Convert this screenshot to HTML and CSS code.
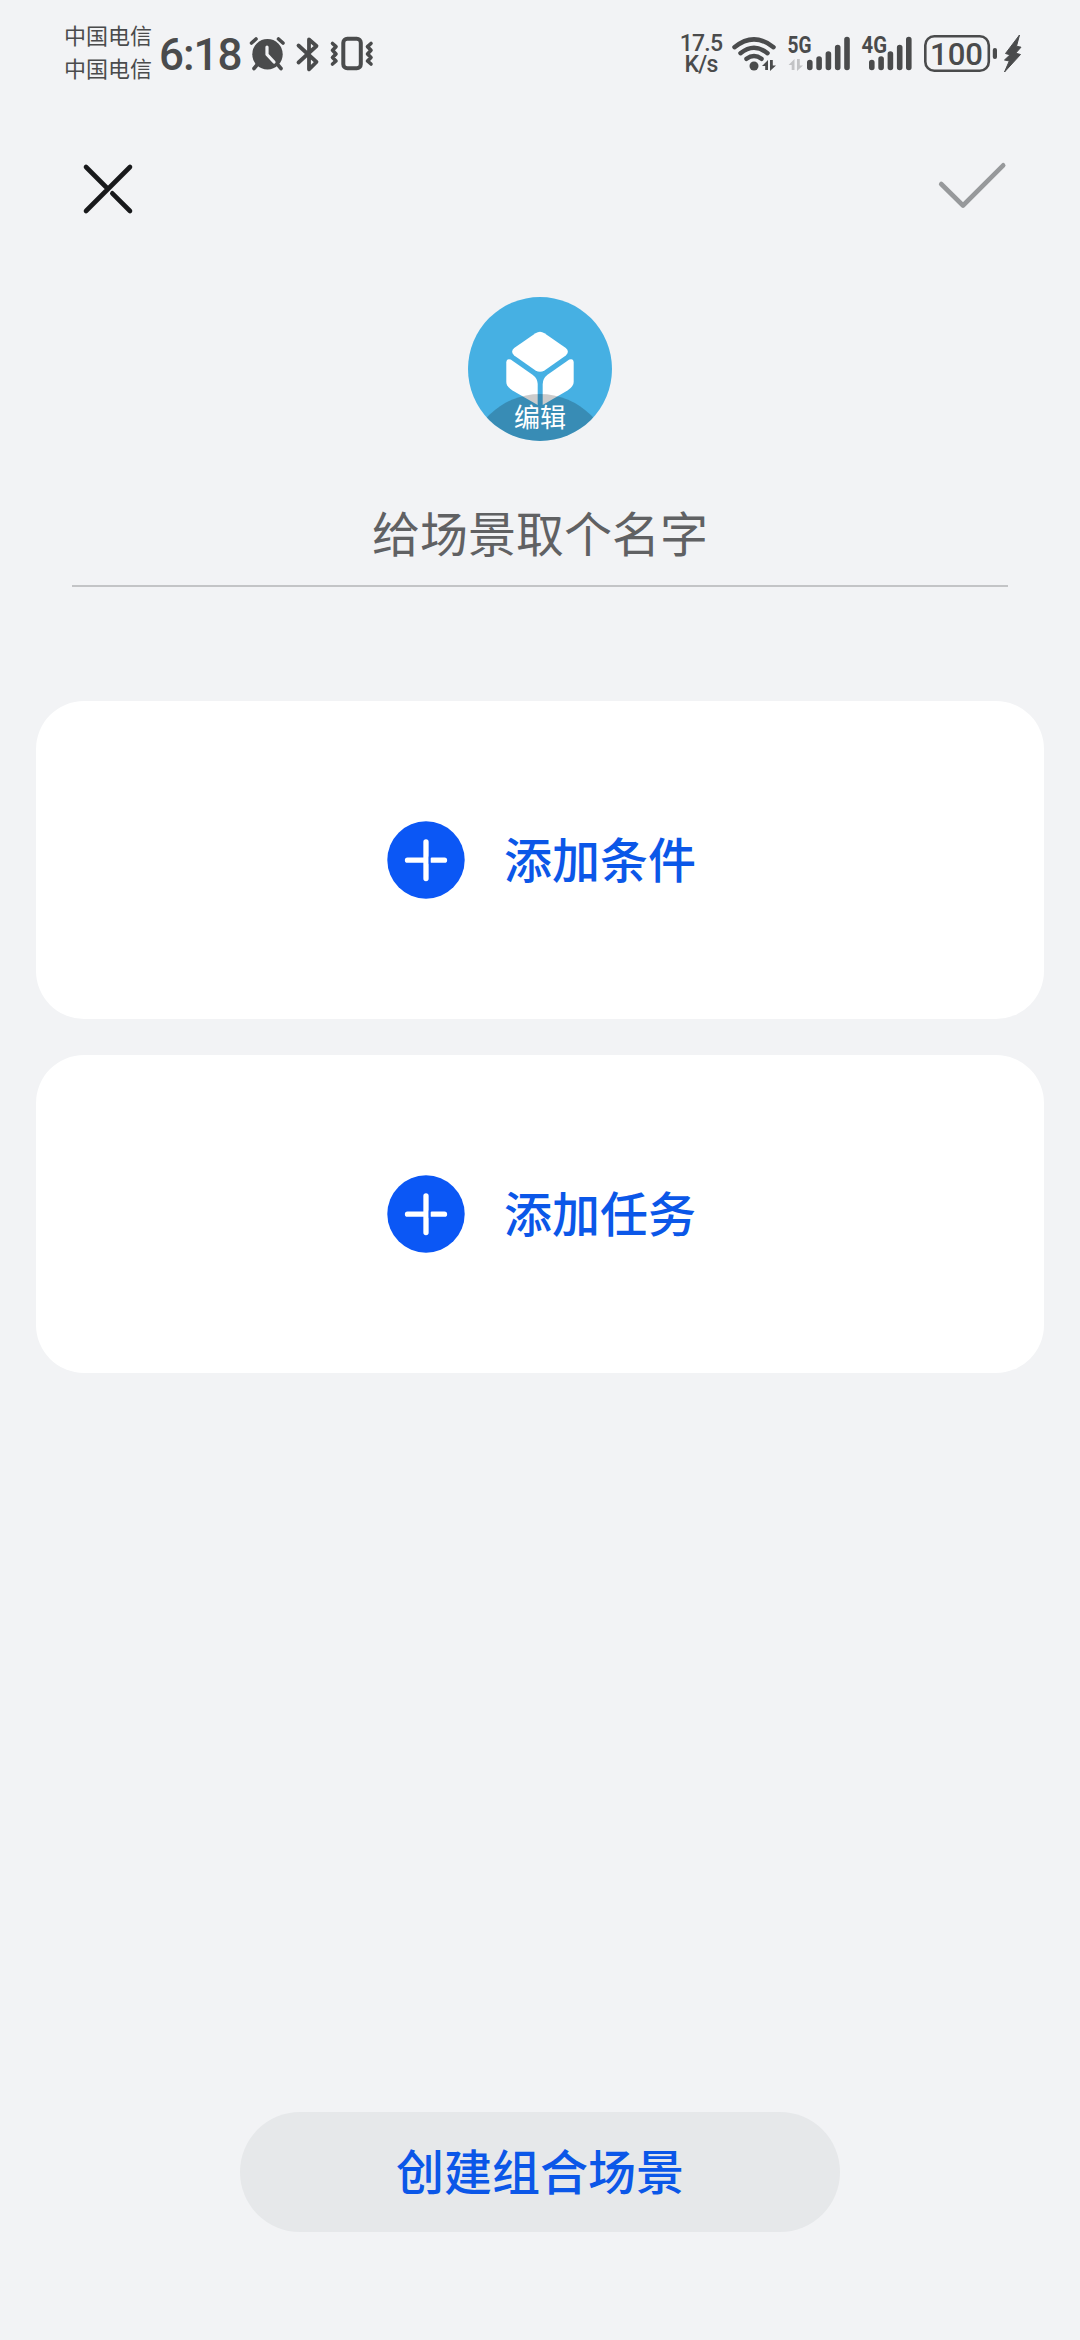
FILE: index.html
```html
<!DOCTYPE html>
<html lang="zh-CN">
<head>
  <meta charset="UTF-8" />
  <meta name="viewport" content="width=device-width, initial-scale=1.0"/>
  <title>创建场景</title>
  <link rel="stylesheet" href="styles.css">
</head>
<body>
  <div class="status-bar">
    <div class="status-left">
      <div class="carriers">
        <span>中国电信</span>
        <span>中国电信</span>
      </div>
      <span class="time">6:18</span>
      <!-- alarm, bluetooth, vibrate -->
      <svg class="status-icons" width="130" height="50" viewBox="248 30 130 50">
        <g fill="none" stroke="#4a4b4c" stroke-linecap="round" stroke-linejoin="round">
          <circle cx="267.5" cy="54.3" r="15.2" fill="#4a4b4c" stroke="none"/>
          <path d="M251.5 43l4.500-4M283 43l-4.500-4M256.500 65.500l-2.500 3M278.500 65.500l2.500 3" stroke-width="3.600"/>
          <path d="M267 47v7.500l7 7.500" stroke="#f2f3f5" stroke-width="3.200"/>
          <path d="M298.500 45.500l18 16.500-7.500 7.300V39.500l7.500 6.500-18 16.500" stroke-width="3.800"/>
          <rect x="343.300" y="38.800" width="17.500" height="29.500" rx="4" stroke-width="4"/>
          <path d="M332.500 43.500l3.500 3.200-3.500 3.600 3.500 3.600-3.500 3.600 3.500 3.500-3.500 3M371 43.500l-3.500 3.200 3.500 3.600-3.500 3.600 3.500 3.600-3.500 3.500 3.500 3" stroke-width="3.600"/>
        </g>
      </svg>
    </div>
    <div class="status-right">
      <div class="speed">
        <span>17.5</span>
        <span>K/s</span>
      </div>
      <svg class="status-icons" width="296" height="50" viewBox="730 30 296 50">
        <!-- wifi -->
        <g fill="none" stroke="#4a4b4c" stroke-width="4.500" stroke-linecap="round">
          <path d="M734.500 47.200Q754 31.500 773.500 47.200"/>
          <path d="M740.500 53.200Q754 42.300 767.500 53.200"/>
          <path d="M746.500 58.800Q754 53.200 761.500 58.800"/>
        </g>
        <circle cx="754" cy="66" r="4.500" fill="#4a4b4c"/>
        <path d="M762 66l6-6v10h-2.800v-4zM776 65.500l-6 5.500V60h2.800v5.500z" fill="#4a4b4c"/>
        <path d="M788.500 65l6-6v11h-2.800v-5zM803 65.500l-6 5.500V59h2.800v6.500z" fill="#c2c3c5"/>
        <!-- signal strength -->
        <g stroke="#4a4b4c" stroke-width="5.600" stroke-linecap="round">
          <path d="M809.800 62.500v5M819.100 59v8.500M828.400 54v13.500M837.700 47.500v20M847 39.500v28"/>
          <path d="M871.800 62.500v5M881.100 59v8.500M890.400 54v13.500M899.700 47.500v20M908.800 39.500v28"/>
        </g>
        <text class="net" x="787.500" y="53" textLength="24" lengthAdjust="spacingAndGlyphs">5G</text>
        <text class="net" x="861.500" y="53" textLength="25.500" lengthAdjust="spacingAndGlyphs">4G</text>
        <!-- battery -->
        <rect x="925.300" y="36.300" width="63.500" height="34.400" rx="9" fill="none" stroke="#4a4b4c" stroke-width="2.600"/>
        <rect x="992.800" y="48" width="4.200" height="11" rx="2" fill="#4a4b4c"/>
        <text class="charge" x="930" y="65.200" textLength="53" lengthAdjust="spacingAndGlyphs">100</text>
        <path d="M1019.500 35l-14 18.500 4.500 1.300-5.500 5.200 4.800 1-4.800 11 16-17.500-4.800-1.300 5.300-6-4.500-1z" fill="#4a4b4c" stroke="#4a4b4c" stroke-width="1" stroke-linejoin="round"/>
      </svg>
    </div>
  </div>

  <header>
    <svg class="close" width="60" height="60" viewBox="78 159 60 60">
      <path d="M86 211l44-44M86 167l21.500 21.500M112.300 193.300l17.700 17.700"/>
    </svg>
    <svg class="confirm" width="76" height="60" viewBox="934 155 76 60">
      <path d="M941.200 184l21.800 21.500 40.200-40.200"/>
    </svg>
  </header>

  <main>
    <div class="avatar">
      <svg width="144" height="144" viewBox="0 0 144 144">
        <g fill="#fff">
          <path d="M67.500 36.300Q72 33.300 76.500 36.300L97.800 51Q102 54.700 97.800 58.400L76.500 73.400Q72 76.200 67.500 73.400L46.200 58.400Q42 54.700 46.200 51L67.500 36.300z"/>
          <path d="M38.300 65.500Q38.500 61 42.700 62.500L64.500 77.700Q69.700 81.500 69.700 87V108L44.500 93.500Q38.300 89.500 38.300 85z"/>
          <path d="M105.700 65.500Q105.500 61 101.300 62.500L79.500 77.700Q74.700 81.500 74.700 87V108L99.500 93.500Q105.700 89.500 105.700 85z"/>
        </g>
      </svg>
      <div class="avatar-shade"></div>
      <span class="avatar-edit">编辑</span>
    </div>

    <div class="scene-name">给场景取个名字</div>

    <div class="card">
      <svg class="plus" width="78" height="78" viewBox="0 0 78 78">
        <circle cx="39" cy="39" r="38.700" fill="#0b57f5"/>
        <path d="M39 20.800v36.800M20.500 39.200H39M45 39.200h12.500"/>
        <path d="M42.700 36v6.400" class="plus-gap"/>
      </svg>
      <span>添加条件</span>
    </div>
    <div class="card">
      <svg class="plus" width="78" height="78" viewBox="0 0 78 78">
        <circle cx="39" cy="39" r="38.700" fill="#0b57f5"/>
        <path d="M39 20.800v36.800M20.500 39.200H39M45 39.200h12.500"/>
        <path d="M42.700 36v6.400" class="plus-gap"/>
      </svg>
      <span>添加任务</span>
    </div>
  </main>

  <footer>
    <button>创建组合场景</button>
  </footer>
</body>
</html>
```
FILE: styles.css
```css
* {
  margin: 0;
  padding: 0;
  box-sizing: border-box;
}

body {
  display: flex;
  flex-direction: column;
  height: 2340px;
  font-family: Roboto, 'Noto Sans CJK SC', sans-serif;
  background-color: #f2f3f5;
  overflow: hidden;
}

svg {
  display: block;
}

/* Status bar */
.status-bar {
  display: flex;
  justify-content: space-between;
  height: 106px;
  padding: 0 54px 0 64px;
  color: #4a4b4c;
}

.status-left, .status-right {
  display: flex;
  align-items: flex-start;
}

.carriers {
  display: flex;
  flex-direction: column;
  width: 95px;
  padding-top: 20px;
  font-size: 22px;
  line-height: 33px;
  white-space: nowrap;
}

.time {
  width: 89px;
  padding-top: 29px;
  font-size: 44px;
  font-weight: 500;
  line-height: 52px;
  letter-spacing: -1px;
}

.status-icons {
  margin-top: 30px;
}

.speed {
  display: flex;
  flex-direction: column;
  align-items: center;
  width: 46px;
  padding-top: 33px;
  margin-right: 6px;
  font-size: 23px;
  font-weight: 500;
  line-height: 21px;
  letter-spacing: -0.8px;
}

.net {
  font-size: 23px;
  font-weight: 700;
  fill: #4a4b4c;
  stroke: #f2f3f5;
  stroke-width: 3px;
  paint-order: stroke;
}

.charge {
  font-size: 32px;
  font-weight: 500;
  fill: #4a4b4c;
}

/* Top actions */
header {
  display: flex;
  justify-content: space-between;
  height: 191px;
  padding: 49px 70px 0 78px;
}

.close, .confirm {
  fill: none;
  stroke: #18191b;
  stroke-width: 4.6px;
  stroke-linecap: round;
  stroke-linejoin: round;
}

.close {
  margin-top: 4px;
}

.confirm {
  stroke: #97999b;
}

main {
  display: flex;
  flex-direction: column;
  align-items: center;
  padding: 0 36px;
}

/* Scene icon */
.avatar {
  position: relative;
  width: 144px;
  height: 144px;
  border-radius: 50%;
  background-color: #46b0e3;
  overflow: hidden;
}

.avatar-shade {
  position: absolute;
  left: 0;
  top: 97px;
  width: 144px;
  height: 144px;
  border-radius: 50%;
  background-color: rgba(0, 0, 0, 0.2);
}

.avatar-edit {
  position: absolute;
  left: 0;
  right: 0;
  top: 102px;
  font-size: 26px;
  font-weight: 400;
  line-height: 38px;
  text-align: center;
  color: #fff;
}

.scene-name {
  width: 936px;
  height: 146px;
  padding-top: 59px;
  margin-bottom: 114px;
  border-bottom: 2px solid #c3c4c6;
  font-size: 48px;
  line-height: 72px;
  text-align: center;
  color: #606163;
}

/* Add cards */
.card {
  display: flex;
  align-items: center;
  justify-content: center;
  gap: 39px;
  width: 1008px;
  height: 318px;
  padding-left: 3px;
  margin-bottom: 36px;
  border-radius: 48px;
  background-color: #fff;
  font-size: 48px;
  font-weight: 500;
  color: #0b57e8;
}

.card span {
  padding-bottom: 6px;
}

.plus {
  fill: none;
  stroke: #fff;
  stroke-width: 5.3px;
  stroke-linecap: round;
}

.plus circle {
  stroke: none;
}

.plus .plus-gap {
  stroke: #0b57f5;
  stroke-width: 2px;
}

/* Bottom button */
footer {
  display: flex;
  justify-content: center;
  margin-top: auto;
  padding-bottom: 108px;
}

button {
  width: 600px;
  height: 120px;
  padding-bottom: 6px;
  border: none;
  border-radius: 60px;
  background-color: #e6e8ea;
  font-family: inherit;
  font-size: 48px;
  font-weight: 500;
  color: #0b57e8;
}
```
